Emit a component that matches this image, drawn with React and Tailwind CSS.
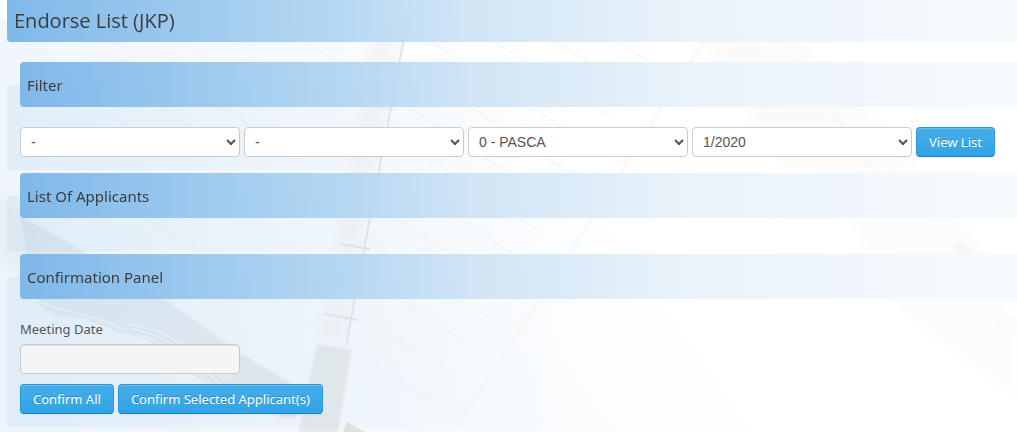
import React from 'react';

const semesterFilters = [
    { id: 'faculty', label: 'Faculty', options: ['-'] },
    { id: 'programme', label: 'Programme', options: ['-'] },
    { id: 'level', label: 'Level', options: ['0 - PASCA'] },
    { id: 'session', label: 'Session', options: ['1/2020'] },
];

const ruledLines = [
    [183, 42, 212, 62], [245, 42, 277, 62], [305, 42, 340, 62],
    [104, 110, 130, 127], [160, 107, 190, 127], [222, 107, 252, 127],
    [68, 167, 84, 177], [130, 160, 150, 173], [193, 160, 213, 173],
    [145, 218, 202, 253], [240, 218, 300, 253], [270, 300, 318, 328],
    [432, 42, 462, 62], [494, 42, 526, 62], [556, 42, 590, 62], [618, 42, 650, 62],
    [410, 108, 440, 127], [470, 107, 500, 127], [532, 107, 562, 127], [595, 107, 614, 119],
    [425, 158, 452, 173], [484, 158, 510, 173], [545, 158, 572, 173],
    [397, 219, 450, 253], [458, 219, 512, 253], [520, 219, 542, 233], [372, 244, 388, 253],
    [397, 299, 471, 346], [459, 299, 488, 317], [362, 317, 452, 374], [360, 355, 434, 402],
];

const ringTicks = [
    [372, 34, 398, 38], [368, 107, 396, 109], [352, 172, 382, 175],
    [340, 244, 370, 249], [335, 279, 358, 284], [325, 314, 357, 320],
];

const Backdrop = () => (
    <svg
        className="absolute inset-0 -z-10 h-full w-full"
        viewBox="0 0 1017 432"
        preserveAspectRatio="xMinYMin slice"
        aria-hidden="true"
    >
        <defs>
            <linearGradient id="wash" x1="0" y1="0.6" x2="1" y2="0.3">
                <stop offset="0" stopColor="#f1f6fc" />
                <stop offset="0.35" stopColor="#f8fbfe" />
                <stop offset="0.6" stopColor="#ffffff" />
            </linearGradient>
            <linearGradient id="cover" x1="0" y1="0" x2="1" y2="1">
                <stop offset="0" stopColor="#cfd6dc" stopOpacity="0.6" />
                <stop offset="0.5" stopColor="#d9dfe5" stopOpacity="0.6" />
                <stop offset="1" stopColor="#d6dbe0" stopOpacity="0.6" />
            </linearGradient>
            <linearGradient id="sleeve" x1="0" y1="0" x2="1" y2="0.6">
                <stop offset="0" stopColor="#f9f9f9" stopOpacity="0.9" />
                <stop offset="0.5" stopColor="#ffffff" stopOpacity="0" />
            </linearGradient>
            <filter id="soft" x="-20%" y="-20%" width="140%" height="140%">
                <feGaussianBlur stdDeviation="6" />
            </filter>
            <filter id="slight" x="-20%" y="-20%" width="140%" height="140%">
                <feGaussianBlur stdDeviation="1" />
            </filter>
        </defs>
        <rect width="1017" height="432" fill="url(#wash)" />
        <rect width="60" height="20" fill="#ffffff" />

        {/* notebook cover and page edges */}
        <path d="M0 190L28 220L60 300L0 260Z" fill="#dde2e6" opacity="0.4" filter="url(#soft)" />
        <path
            d="M20 216C70 242 120 274 170 303L240 353L292 384L304 400L296 418L283 418C240 402 218 392 190 372C166 350 148 338 123 333C98 326 86 316 67 316C46 314 36 304 34 294Z"
            fill="url(#cover)"
            filter="url(#slight)"
        />
        <g fill="none" stroke="#ffffff" strokeWidth="1.5" opacity="0.6">
            <path d="M128 324C170 330 190 350 236 382" />
            <path d="M132 329C168 336 186 352 228 382" />
            <path d="M136 334C166 342 184 356 220 383" />
            <path d="M142 340C166 348 182 360 211 383" />
            <path d="M38 300C60 314 90 312 126 330" />
        </g>

        {/* ruled pages and binding */}
        <g stroke="#dfe3e8" strokeWidth="1" opacity="0.5">
            {ruledLines.map(([x1, y1, x2, y2], i) => (
                <line key={i} x1={x1} y1={y1} x2={x2} y2={y2} />
            ))}
        </g>
        <path d="M375 20L400 20L345 340L318 340Z" fill="#f0f0f1" opacity="0.6" filter="url(#soft)" />
        <path d="M411 0L346 346" stroke="#e2e4e7" strokeWidth="2" />
        <g stroke="#e0e2e5" strokeWidth="2">
            {ringTicks.map(([x1, y1, x2, y2], i) => (
                <line key={i} x1={x1} y1={y1} x2={x2} y2={y2} opacity={y1 > 200 ? 1 : 0.35} />
            ))}
        </g>
        <path d="M317 344L352 349L338 432H298Z" fill="#e2e4e5" opacity="0.8" filter="url(#slight)" />
        <path d="M347 422L368 434H342Z" fill="#dedfe0" />

        {/* page corner and sleeve */}
        <path d="M704 42C670 92 610 190 560 270L453 432H530L740 100Z" fill="url(#sleeve)" />
        <path d="M704 42C670 92 610 190 560 270L453 432" fill="none" stroke="#f8f8f8" strokeWidth="4" filter="url(#slight)" />
        <path d="M704 42C740 30 770 38 797 62L880 175L780 165Z" fill="#fbf9f8" opacity="0.8" filter="url(#soft)" />
        <path d="M754 0L797 62L877 173L925 216L1017 310V290L900 150L800 40L775 0Z" fill="#f9f9f9" opacity="0.6" filter="url(#soft)" />
        <path d="M754 0L797 62L877 173" fill="none" stroke="#f5f5f4" strokeWidth="2" filter="url(#slight)" />
        <path d="M850 216L940 216L1017 330V400L900 310Z" fill="#fcfcfc" filter="url(#soft)" />
        <ellipse cx="963" cy="250" rx="8" ry="10" fill="#f8f7f6" transform="rotate(-40 963 250)" />
        <circle cx="1007" cy="325" r="11" fill="#fbfbfa" />
    </svg>
);

const Panel = ({ title, children }) => (
    <fieldset className="min-w-0 rounded-l bg-linear-to-r from-[#bfdcf0]/30 to-white/0 to-55% pb-[13px] pl-[13px]">
        <legend className="flex h-[45px] w-full items-center rounded-l bg-[linear-gradient(to_right,#7ab6e9,#b3d6f2_33%,#cfe4f5_46%,#eaf3fb_68%,#f5fafd)] px-[7px] text-[15px] leading-5 text-[#333] opacity-95">
            {title}
        </legend>
        {children}
    </fieldset>
);

const Button = ({ children }) => (
    <button
        type="button"
        className="h-[30px] rounded border border-[#2f96d4] border-b-[#1f7fb8] bg-linear-to-b from-[#46aeea] to-[#2fa4e7] px-3 text-[13px] leading-5 whitespace-nowrap text-white shadow-[inset_0_1px_0_rgba(255,255,255,0.2),0_1px_2px_rgba(0,0,0,0.05)] text-shadow-[0_-1px_0_rgba(0,0,0,0.25)]"
    >
        {children}
    </button>
);

const App = () => {
    return (
        <div className="relative isolate min-h-screen overflow-hidden bg-white font-['Noto_Sans','Open_Sans',sans-serif] text-[13px] text-[#555]">
            <Backdrop />
            <fieldset className="min-w-0 bg-linear-to-r from-[#d9eaf7]/15 to-white/0 to-55% pb-[5px] pl-[7px]">
                <legend className="flex h-[42px] w-full items-center rounded-bl bg-[linear-gradient(to_right,#7ab6e9,#b3d6f2_33%,#cfe4f5_46%,#eaf3fb_68%,#f5fafd)] px-[7px] font-['Open_Sans',sans-serif] text-xl text-[#333] opacity-95">
                    Endorse List (JKP)
                </legend>

                <form className="mt-5 space-y-[3px]">
                    <Panel title="Filter">
                        <div className="mt-5 flex flex-wrap gap-1">
                            {semesterFilters.map((filter) => (
                                <select
                                    key={filter.id}
                                    id={filter.id}
                                    aria-label={filter.label}
                                    className="h-[30px] w-[220px] rounded border border-[#ccc] bg-white px-[6px] font-['Liberation_Sans',sans-serif] text-sm text-[#555]"
                                >
                                    {filter.options.map((option) => (
                                        <option key={option}>{option}</option>
                                    ))}
                                </select>
                            ))}
                            <Button>View List</Button>
                        </div>
                    </Panel>

                    <Panel title="List Of Applicants">
                        <div className="h-5" />
                    </Panel>

                    <Panel title="Confirmation Panel">
                        <label htmlFor="meetingDate" className="mt-5 block leading-5">
                            Meeting Date
                        </label>
                        <input
                            id="meetingDate"
                            type="text"
                            readOnly
                            className="mt-[5px] block h-[30px] w-[220px] rounded border border-[#ccc] bg-[#f5f5f5] px-[6px] shadow-[inset_0_1px_1px_rgba(0,0,0,0.075)]"
                        />
                        <div className="mt-[10px] flex flex-wrap gap-1">
                            <Button>Confirm All</Button>
                            <Button>Confirm Selected Applicant(s)</Button>
                        </div>
                    </Panel>
                </form>
            </fieldset>
        </div>
    );
};

export default App;
